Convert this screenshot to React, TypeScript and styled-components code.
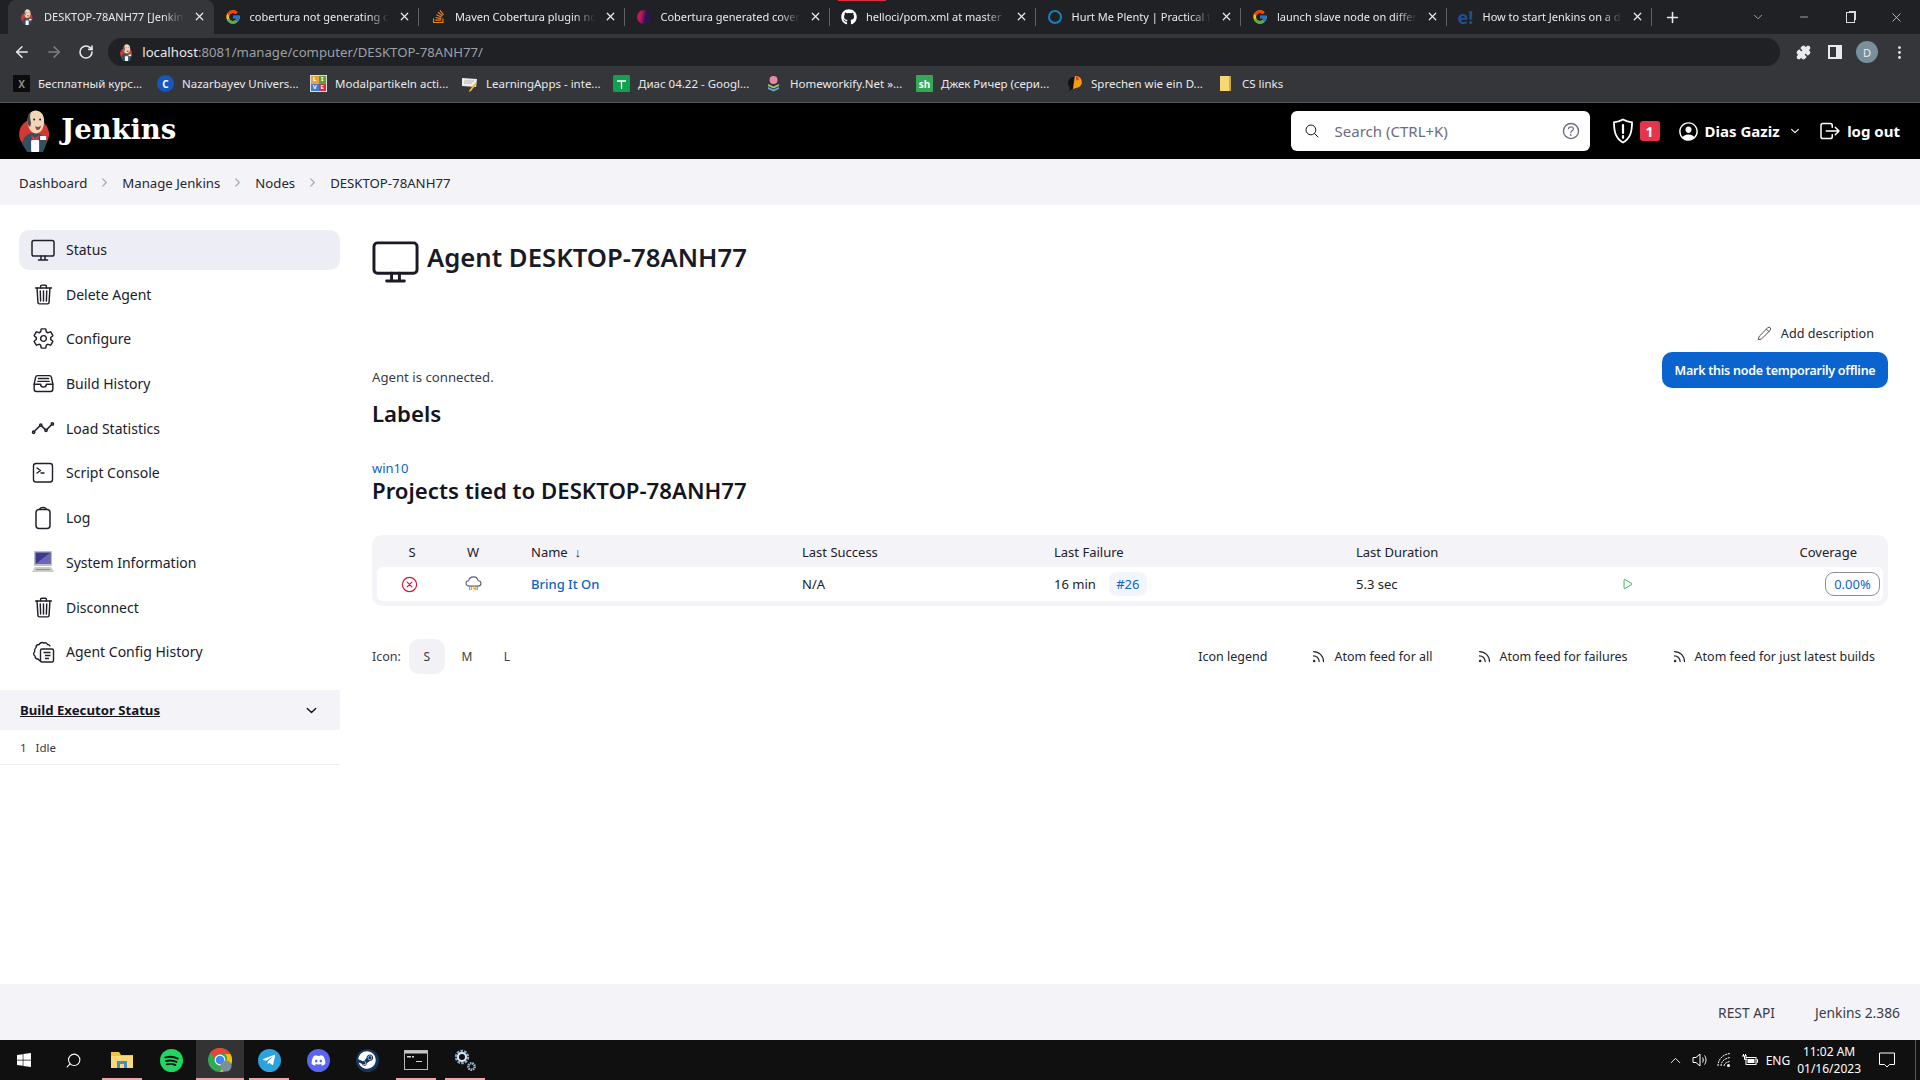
import React from 'react';
import styled, { createGlobalStyle } from 'styled-components';
import {
  IoAnalyticsOutline,
  IoChevronDownOutline,
  IoChevronForwardOutline,
  IoCloseCircleOutline,
  IoFileTrayFullOutline,
  IoHelpCircleOutline,
  IoLogOutOutline,
  IoPersonCircleOutline,
  IoPlayOutline,
  IoSearchOutline,
  IoSettingsOutline,
  IoTrashOutline,
} from 'react-icons/io5';
import { FaDiscord, FaGithub, FaStackOverflow, FaSteam, FaTelegramPlane, FaWindows } from 'react-icons/fa';
import { FcGoogle } from 'react-icons/fc';
import {
  ArrowLeft,
  ArrowRight,
  ChevronDown,
  ChevronUp,
  EllipsisVertical,
  Minus,
  Pencil,
  Plus,
  Puzzle,
  RotateCw,
  Rss,
  Search as SearchGlyph,
  X,
} from 'lucide-react';

const UI_FONT = '"Noto Sans", "Open Sans", sans-serif';

const GlobalStyle = createGlobalStyle`
  html, body {
    margin: 0;
    padding: 0;
    height: 100%;
    overflow: hidden;
    background: #fff;
  }
  * {
    box-sizing: border-box;
  }
  body {
    font-family: ${UI_FONT};
    color: #14141f;
  }
`;

const Screen = styled.div`
  display: flex;
  flex-direction: column;
  width: 1920px;
  height: 1080px;
  overflow: hidden;
`;

/* browser chrome */

const TabStrip = styled.div`
  display: flex;
  align-items: stretch;
  height: 34px;
  padding-left: 8px;
  background: #202124;
`;

const Tab = styled.div<{ $active?: boolean; $loading?: boolean }>`
  position: relative;
  display: flex;
  align-items: center;
  flex: 0 0 205.5px;
  min-width: 0;
  padding: 0 8px 1px 11px;
  gap: 9px;
  font-size: 11px;
  color: #e8eaed;
  background: ${({ $active }) => ($active ? '#35363a' : 'transparent')};
  border-radius: ${({ $active }) => ($active ? '8px 8px 0 0' : '0')};

  &::after {
    content: '';
    position: absolute;
    right: 0;
    top: 8px;
    bottom: 8px;
    width: 1px;
    background: ${({ $active }) => ($active ? 'transparent' : '#5f6368')};
  }

  &::before {
    content: '';
    position: absolute;
    top: 0;
    left: 8px;
    width: 48px;
    height: 1px;
    background: ${({ $loading }) => ($loading ? '#d9303e' : 'transparent')};
  }
`;

const TabFavicon = styled.span`
  display: flex;
  align-items: center;
  justify-content: center;
  flex: 0 0 16px;
  height: 16px;
`;

const TabTitle = styled.span`
  flex: 1;
  min-width: 0;
  overflow: hidden;
  white-space: nowrap;
  -webkit-mask-image: linear-gradient(to right, #000 85%, transparent);
  mask-image: linear-gradient(to right, #000 85%, transparent);
`;

const NewTab = styled.div`
  display: flex;
  align-items: center;
  margin-left: 12px;
  color: #e8eaed;
`;

const WindowButtons = styled.div`
  display: flex;
  margin-left: auto;
  margin-right: 1px;
`;

const WindowButton = styled.div`
  display: flex;
  align-items: center;
  justify-content: center;
  width: 46px;
  color: #dadce0;
`;

const RestoreGlyph = styled.span`
  width: 9px;
  height: 11px;
  border: 1px solid #dadce0;
  box-shadow: 2px -2px 0 -1px #dadce0;
`;

const Toolbar = styled.div`
  display: flex;
  align-items: center;
  height: 36px;
  padding: 0 5px 0 6px;
  background: #35363a;
`;

const ToolButton = styled.div<{ $dim?: boolean }>`
  display: flex;
  align-items: center;
  justify-content: center;
  flex: 0 0 32px;
  height: 28px;
  color: ${({ $dim }) => ($dim ? '#7d7f83' : '#e8eaed')};
`;

const Omnibox = styled.div`
  display: flex;
  align-items: center;
  flex: 1;
  height: 28px;
  margin: 0 7px 0 6px;
  padding-left: 12px;
  gap: 10px;
  border-radius: 14px;
  background: #202124;
  font-size: 13.2px;
  color: #9aa0a6;
`;

const UrlHost = styled.span`
  color: #e8eaed;
`;

const SidePanelGlyph = styled.span`
  width: 14px;
  height: 14px;
  border: 2px solid #e8eaed;
  border-right-width: 6px;
`;

const Avatar = styled.span`
  display: flex;
  align-items: center;
  justify-content: center;
  width: 22px;
  height: 22px;
  border-radius: 50%;
  background: #78909c;
  font-size: 11px;
  color: #e8eaed;
`;

const BookmarksBar = styled.div`
  display: flex;
  align-items: center;
  height: 33px;
  padding: 0 0 5px 13px;
  background: #35363a;
  border-bottom: 1px solid #55565a;
`;

const Bookmark = styled.div<{ $x: number }>`
  display: flex;
  align-items: center;
  flex: 0 0 ${({ $x }) => $x}px;
  gap: 8px;
  font-size: 11.5px;
  color: #e8eaed;
  white-space: nowrap;
`;

const FaviconBox = styled.span<{ $bg: string; $color?: string; $round?: boolean }>`
  display: flex;
  align-items: center;
  justify-content: center;
  flex: 0 0 17px;
  height: 17px;
  background: ${({ $bg }) => $bg};
  color: ${({ $color }) => $color ?? '#fff'};
  border-radius: ${({ $round }) => ($round ? '50%' : '1px')};
  font-size: 10px;
  font-weight: 700;
  line-height: 1;
`;

const LiveGrid = styled.span`
  display: grid;
  grid-template-columns: 1fr 1fr;
  flex: 0 0 17px;
  height: 17px;
  border: 1px solid #ddd;
  background: #fff;
  font-size: 6px;
  font-weight: 700;
  line-height: 7px;
  color: #fff;
  text-align: center;
`;

const LiveCell = styled.span<{ $bg: string }>`
  background: ${({ $bg }) => $bg};
`;

const EdurekaMark = styled.span`
  font-size: 18px;
  font-weight: 700;
  color: #1d4f91;
  line-height: 1;
`;

/* jenkins header */

const JenkinsHeader = styled.header`
  display: flex;
  align-items: center;
  height: 56px;
  padding: 0 20px 0 19px;
  background: #000;
  color: #fff;
`;

const Brand = styled.div`
  display: flex;
  align-items: center;
  gap: 12px;
`;

const BrandName = styled.span`
  margin-bottom: 4px;
  font-family: 'DejaVu Serif', serif;
  font-size: 27.5px;
  font-weight: 700;
  letter-spacing: -0.1px;
`;

const SearchBox = styled.div`
  display: flex;
  align-items: center;
  width: 299px;
  height: 40px;
  margin-left: auto;
  padding: 0 8px 0 13px;
  border-radius: 6px;
  background: #fff;
  color: #14141f;
`;

const SearchText = styled.span`
  flex: 1;
  margin-left: 15px;
  font-size: 15px;
  color: #6d6b7d;
`;

const HeaderItem = styled.div<{ $gap?: number; $left?: number }>`
  display: flex;
  align-items: center;
  gap: ${({ $gap }) => $gap ?? 6}px;
  margin-left: ${({ $left }) => $left ?? 0}px;
  font-size: 15px;
  font-weight: 700;
`;

const UserChevron = styled.span`
  display: flex;
  margin-left: 4px;
`;

const AlertBadge = styled.span`
  display: flex;
  align-items: center;
  justify-content: center;
  width: 20px;
  height: 20px;
  border-radius: 3px;
  background: #e6354a;
  font-size: 14px;
  font-weight: 700;
`;

/* breadcrumbs */

const Breadcrumbs = styled.nav`
  display: flex;
  align-items: center;
  height: 46px;
  padding: 1px 0 0 19px;
  background: #f4f4f8;
  font-size: 13.2px;
  color: #26262f;
`;

const Crumb = styled.span`
  white-space: nowrap;
`;

const CrumbArrow = styled.span`
  display: flex;
  justify-content: center;
  width: 35px;
  color: #a6a6b0;
`;

/* page body */

const Body = styled.div`
  display: flex;
  flex: 1;
  min-height: 0;
`;

const Sidebar = styled.aside`
  flex: 0 0 340px;
  padding-top: 25px;
`;

const TaskList = styled.div`
  display: flex;
  flex-direction: column;
  gap: 4.7px;
  padding-left: 19px;
`;

const Task = styled.div<{ $active?: boolean }>`
  display: flex;
  align-items: center;
  height: 40px;
  padding: 0 0 1px 12px;
  gap: 11px;
  border-radius: 10px;
  background: ${({ $active }) => ($active ? '#ededf5' : 'transparent')};
  font-size: 14px;
  color: #20202b;
`;

const TaskIcon = styled.span`
  display: flex;
  align-items: center;
  justify-content: center;
  flex: 0 0 24px;
  height: 24px;
  color: #20202b;
`;

const ExecutorHeader = styled.div`
  display: flex;
  align-items: center;
  justify-content: space-between;
  height: 40px;
  margin-top: 18px;
  padding: 0 21px 0 20px;
  background: #f4f4f8;
  font-size: 13.2px;
  font-weight: 700;
  text-decoration: underline;
`;

const ExecutorRow = styled.div`
  display: flex;
  align-items: center;
  height: 35px;
  padding-left: 20px;
  gap: 9px;
  border-bottom: 1px solid #eeeef2;
  font-size: 11.5px;
  color: #3a3a46;
`;

const Main = styled.main`
  flex: 1;
  padding: 38px 32px 0;
`;

const TitleRow = styled.div`
  display: flex;
  align-items: center;
  height: 44px;
  gap: 8px;
  color: #1a1a27;
`;

const TitleIcon = styled.span`
  display: flex;
  margin-bottom: 7px;
`;

const PageTitle = styled.h1`
  margin: 0 0 14px;
  font-size: 25.7px;
  font-weight: 600;
  line-height: 1.2;
`;

const DescriptionRow = styled.div`
  display: flex;
  justify-content: flex-end;
  align-items: center;
  height: 24px;
  margin-top: 34px;
  padding-right: 14px;
  gap: 9px;
  font-size: 12.6px;
  color: #26262f;
`;

const StatusRow = styled.div`
  display: flex;
  justify-content: space-between;
  align-items: flex-end;
  margin-top: 7px;
`;

const StatusText = styled.span`
  margin-bottom: 1px;
  font-size: 13.2px;
  line-height: 20px;
  color: #3a3a46;
`;

const PrimaryButton = styled.button`
  height: 36px;
  width: 226px;
  padding: 0;
  border: none;
  border-radius: 10px;
  background: #0b63ce;
  color: #fff;
  font-family: ${UI_FONT};
  font-size: 12.5px;
  font-weight: 600;
  letter-spacing: -0.25px;
  white-space: nowrap;
`;

const SectionTitle = styled.h2<{ $top: number }>`
  margin: ${({ $top }) => $top}px 0 0;
  font-size: 22.2px;
  font-weight: 600;
  line-height: 28px;
  color: #14141f;
`;

const LabelLink = styled.a`
  display: block;
  margin-top: 30px;
  font-size: 13px;
  line-height: 20px;
  color: #0b63ce;
`;

const ProjectsTable = styled.div`
  margin-top: 30px;
  padding: 0 5px 5px;
  border-radius: 10px;
  background: #f4f4f8;
`;

const TableGrid = styled.div`
  display: grid;
  grid-template-columns: 64px 64px 297px 252px 302px 244px 56px 1fr;
  align-items: center;
`;

const HeaderRow = styled(TableGrid)`
  height: 32px;
  padding-top: 2px;
  font-size: 13px;
  color: #20202b;
`;

const DataRow = styled(TableGrid)`
  height: 34px;
  border-radius: 6px;
  background: #fff;
  font-size: 13px;
  color: #20202b;
`;

const Cell = styled.div<{ $align?: 'center' | 'right'; $pad?: number; $padRight?: number }>`
  display: flex;
  align-items: center;
  justify-content: ${({ $align }) =>
    $align === 'center' ? 'center' : $align === 'right' ? 'flex-end' : 'flex-start'};
  padding-left: ${({ $pad }) => $pad ?? 0}px;
  padding-right: ${({ $padRight }) => $padRight ?? 0}px;
  gap: 8px;
`;

const JobLink = styled.a`
  color: #0b63ce;
  font-weight: 500;
`;

const BuildChip = styled.span`
  display: flex;
  align-items: center;
  justify-content: center;
  width: 38px;
  height: 24px;
  margin-left: 5px;
  border-radius: 8px;
  background: #f1f6fc;
  color: #0b63ce;
`;

const CoverageChip = styled.span`
  display: flex;
  align-items: center;
  justify-content: center;
  width: 55px;
  height: 24px;
  border: 1px solid #8c8c99;
  border-radius: 9px;
  color: #0b63ce;
`;

const LegendRow = styled.div`
  display: flex;
  align-items: center;
  justify-content: space-between;
  margin-top: 33px;
  height: 35px;
  padding-right: 13px;
  font-size: 12.5px;
  color: #3a3a46;
`;

const SizePicker = styled.div`
  display: flex;
  align-items: center;
`;

const SizeOption = styled.span<{ $active?: boolean; $first?: boolean }>`
  display: flex;
  align-items: center;
  justify-content: center;
  width: 36px;
  height: 35px;
  margin-left: ${({ $first }) => ($first ? '8px' : '4px')};
  border-radius: 10px;
  background: ${({ $active }) => ($active ? '#f1f1f6' : 'transparent')};
  font-size: 12px;
`;

const FeedLinks = styled.div`
  display: flex;
  align-items: center;
  gap: 44px;
`;

const FeedLink = styled.span`
  display: flex;
  align-items: center;
  gap: 8px;
  color: #26262f;
`;

const PageFooter = styled.footer`
  display: flex;
  justify-content: flex-end;
  align-items: center;
  height: 56px;
  padding-right: 20px;
  gap: 40px;
  background: #f4f4f8;
  font-size: 13.8px;
  color: #3a3a46;
`;

/* windows taskbar */

const Taskbar = styled.div`
  display: flex;
  align-items: center;
  height: 40px;
  background: #101010;
  color: #fff;
`;

const TaskbarSlot = styled.div<{ $active?: boolean; $open?: boolean }>`
  position: relative;
  display: flex;
  align-items: center;
  justify-content: center;
  width: 48px;
  height: 40px;
  margin-right: 1px;
  background: ${({ $active }) => ($active ? '#333' : 'transparent')};

  &::after {
    content: '';
    position: absolute;
    bottom: 0;
    left: ${({ $active }) => ($active ? '0' : '4px')};
    right: ${({ $active }) => ($active ? '0' : '4px')};
    height: 2px;
    background: ${({ $open }) => ($open ? '#f0a3a8' : 'transparent')};
  }
`;

const TrayGroup = styled.div`
  display: flex;
  align-items: center;
  margin-left: auto;
  padding-right: 4px;
  font-size: 12px;
`;

const TrayIcon = styled.span`
  display: flex;
  align-items: center;
  justify-content: center;
  flex: 0 0 24.5px;
`;

const TrayLang = styled.span`
  margin-left: 4px;
`;

const Clock = styled.div`
  display: flex;
  flex-direction: column;
  align-items: center;
  margin-left: 7px;
  line-height: 17px;
`;

const NotifySlot = styled.span`
  display: flex;
  margin-left: 18px;
`;

const ShowDesktop = styled.span`
  width: 1px;
  height: 40px;
  margin-left: 20px;
  background: #555;
`;

const JenkinsFace: React.FC<{ size: number }> = ({ size }) => (
  <svg width={size * 0.72} height={size} viewBox="0 0 30 42">
    <circle cx="15" cy="24" r="15" fill="#d33833" />
    <path d="M3 34c1-7 5-11 12-11s11 4 13 9l-4 10H8z" fill="#335061" />
    <path d="M8.500 11C8.500 4 12 .5 16.500 .5S25 4 25 11c0 7-3 12-8 12.500-4.500 0-8.500-5-8.500-12.500z" fill="#f0d6b7" />
    <path d="M8.500 12C8 7 9.500 4 11.500 2.500 10.500 6 11 10 12 13l-1 4c-1.500-1-2.500-3-2.500-5z" fill="#4a4a4a" />
    <path d="M16 16c2 1.500 4.500 1.200 6-.5-.5 3-2 4.500-3.500 4.500S16.500 18.500 16 16z" fill="#8a4b3a" />
    <circle cx="15" cy="9.500" r="1" fill="#222" />
    <circle cx="21" cy="9.500" r="1" fill="#222" />
    <path d="M12 25l4 3 4-3-1 5h-6z" fill="#d33833" />
    <rect x="12" y="30" width="8" height="12" rx="1" fill="#fff" />
    <path d="M21 26h6v4h-6z" fill="#fff" />
  </svg>
);

const DesktopGlyph: React.FC<{ size: number }> = ({ size }) => (
  <svg
    width={size}
    height={size}
    viewBox="0 0 24 24"
    fill="none"
    stroke="currentColor"
    strokeWidth="1.500"
    strokeLinecap="round"
    strokeLinejoin="round"
  >
    <rect x="1" y="2.500" width="22" height="15.500" rx="1.800" />
    <path d="M10 18v3.500M14 18v3.500M7.500 22h9" />
  </svg>
);

const ChromeLogo: React.FC = () => (
  <svg width="24" height="24" viewBox="0 0 24 24">
    <circle cx="12" cy="12" r="12" fill="#34a853" />
    <path d="M12 0a12 12 0 0 1 10.400 6H12a6 6 0 0 0-5.600 3.600L2.300 4.700A12 12 0 0 1 12 0z" fill="#ea4335" />
    <path d="M22.400 6A12 12 0 0 1 12 24l5.200-9A6 6 0 0 0 17 6z" fill="#fbbc05" />
    <circle cx="12" cy="12" r="5.400" fill="#fff" />
    <circle cx="12" cy="12" r="4.300" fill="#4285f4" />
    <circle cx="18" cy="18" r="5.600" fill="#78909c" />
  </svg>
);

const ShieldAlert: React.FC = () => (
  <svg width="22" height="26" viewBox="0 0 22 26" fill="none" stroke="#fff" strokeWidth="1.800">
    <path d="M11 1.500c3 1.800 6 2.600 9 2.800 0 9-1.500 16-9 20.200C3.500 20.300 2 13.300 2 4.300c3-.2 6-1 9-2.800z" />
    <path d="M11 7v8M11 18v1.800" strokeWidth="2.200" strokeLinecap="round" />
  </svg>
);

const ClipboardPlain: React.FC = () => (
  <svg width="24" height="24" viewBox="0 0 24 24" fill="none" stroke="currentColor" strokeWidth="1.500">
    <rect x="5" y="3.500" width="14" height="19" rx="3" />
    <path d="M8.500 3.500C9 2 10 1.500 12 1.500s3 .5 3.500 2" />
  </svg>
);

const TerminalBox: React.FC = () => (
  <svg width="24" height="24" viewBox="0 0 24 24" fill="none" stroke="currentColor" strokeWidth="1.400" strokeLinecap="round" strokeLinejoin="round">
    <rect x="2.500" y="2.500" width="19" height="18.500" rx="2.500" />
    <path d="M6 7l3.500 2.500L6 12M10 12h3" />
  </svg>
);

const ConfigHistory: React.FC = () => (
  <svg width="24" height="24" viewBox="0 0 24 24" fill="none" stroke="currentColor" strokeWidth="1.400">
    <path d="M11 21c-2 .5-3-1-4-2-2 0-3-1-3-3-1.500-1-2-3-.5-4 0-2 0-3.500 1.500-4.500 0-2 1.500-3 3-3 1-1.500 3-2.500 5-1.500 1.500-.5 3 .5 3.500 1.500 1 0 2.500 1 2.500 2" />
    <rect x="9.500" y="9" width="13" height="13" rx="1.500" fill="#fff" />
    <path d="M12.500 12.500h7M14 15.500h5.500M14 18.500h4" />
  </svg>
);

const OldComputer: React.FC = () => (
  <svg width="24" height="24" viewBox="0 0 24 24">
    <rect x="3" y="1" width="18" height="15" rx="1" fill="#b9bcc4" />
    <rect x="4.500" y="2.500" width="15" height="11.500" fill="#3d3a8c" />
    <path d="M4.500 14L19.500 2.500V14z" fill="#6a68b5" />
    <path d="M4 17h16l3 5H1z" fill="#c8cbc6" />
    <path d="M5 19h14v1H5z" fill="#8c8f8b" />
  </svg>
);

const StormCloud: React.FC = () => (
  <svg width="17" height="17" viewBox="0 0 16 16" fill="none">
    <path
      d="M4 9.500C2 9.500 1 8.300 1 6.900 1 5.500 2.200 4.500 3.300 4.500 3.800 2.300 5.500 .8 8 .8c2.400 0 4 1.500 4.500 3.700C14 4.500 15 5.500 15 7s-1 2.500-3 2.500z"
      stroke="#5c5e70"
      strokeWidth="1"
    />
    <path d="M8.600 8.500L7 12h1.500L7.500 15.500 10.300 11.300H8.800l1-2.800z" fill="#f5b81c" />
    <path d="M4 10.500l.6 3M12 10.500l-.6 3M5.800 10.500l.3 2.500M10.400 10.500l-.3 2.500" stroke="#4a9be0" strokeWidth="0.900" />
  </svg>
);

const ExplorerIcon: React.FC = () => (
  <svg width="24" height="24" viewBox="0 0 24 24">
    <path d="M1 4h8l2 3h12v13H1z" fill="#f5c242" />
    <path d="M1 8h22v12H1z" fill="#fbd978" />
    <rect x="7" y="13" width="10" height="7" fill="#3f8fd2" />
    <rect x="10" y="16" width="4" height="4" fill="#fbd978" />
  </svg>
);

const CmdIcon: React.FC = () => (
  <svg width="24" height="20" viewBox="0 0 24 20">
    <rect x="0.500" y="0.500" width="23" height="19" fill="#0c0c0c" stroke="#b8b8b8" />
    <rect x="1" y="1" width="22" height="2.500" fill="#c8c8c8" />
    <path d="M3 6h4v1.500H3zM8 6h2v1.500H8zM12 11h6v1H12z" fill="#d8d8d8" />
  </svg>
);

const GearsIcon: React.FC = () => (
  <svg width="24" height="24" viewBox="0 0 24 24" fill="none">
    <circle cx="9" cy="9" r="5.500" stroke="#7fa6c9" strokeWidth="3.500" strokeDasharray="2.400 1" />
    <circle cx="9" cy="9" r="4" stroke="#dfe6ec" strokeWidth="2" />
    <circle cx="18.500" cy="18.500" r="3.200" stroke="#a5bcd0" strokeWidth="2.400" strokeDasharray="1.500 .7" />
  </svg>
);

const SpotifyIcon: React.FC = () => (
  <svg width="23" height="23" viewBox="0 0 24 24">
    <circle cx="12" cy="12" r="12" fill="#1ed760" />
    <path d="M5.500 8.800c4.500-1.200 9-.9 13 1.200M6.300 12.500c3.800-1 7.500-.7 10.800 1M7 16c3.200-.8 6.200-.6 9 .8" stroke="#101010" strokeWidth="2" strokeLinecap="round" fill="none" />
  </svg>
);

const SpeakerIcon: React.FC = () => (
  <svg width="17" height="16" viewBox="0 0 17 16" fill="none" stroke="#fff" strokeWidth="1">
    <path d="M1 5.500h3L8 2v12l-4-3.500H1z" />
    <path d="M10.500 5.500c1 1.500 1 3.500 0 5M12.500 3.500c2 2.500 2 6.500 0 9" />
  </svg>
);

const WifiIcon: React.FC = () => (
  <svg width="15" height="16" viewBox="0 0 15 16" fill="none" stroke="#fff" strokeWidth="1">
    <path d="M1 14C1 8 5 2.500 13 1.500M4 14c0-4 3-7.500 9-8.500M7 14c0-2 2-4 6-4.500" strokeDasharray="2 .8" />
    <circle cx="11.500" cy="13.500" r="1.500" fill="#fff" stroke="none" />
  </svg>
);

const BatteryIcon: React.FC = () => (
  <svg width="17" height="14" viewBox="0 0 17 14" fill="none" stroke="#fff" strokeWidth="1">
    <rect x="5" y="4.500" width="10" height="7" />
    <rect x="6.500" y="6" width="7" height="4" fill="#fff" stroke="none" />
    <path d="M15.500 6.500h1v3h-1" />
    <path d="M1 3h5M2.500 1v2M4.500 1v2M3.500 3v3.500h2" />
  </svg>
);

const NotifyIcon: React.FC = () => (
  <svg width="16" height="16" viewBox="0 0 16 16" fill="none" stroke="#fff" strokeWidth="1">
    <path d="M.5 1h15v11.500h-5L8 15l-2.500-2.500h-5z" />
  </svg>
);

const NoteIcon: React.FC = () => (
  <svg width="17" height="17" viewBox="0 0 17 17">
    <path d="M1 3l15 1-1 8-14-1z" fill="#ececec" />
    <path d="M3 6h10M3 8h8" stroke="#aaa" strokeWidth="0.800" />
    <path d="M14 8l1.500 1-5.500 7-2 1 .5-2z" fill="#e7b93a" />
  </svg>
);

const SheetIcon: React.FC = () => (
  <svg width="17" height="17" viewBox="0 0 17 17">
    <rect width="17" height="17" rx="1.500" fill="#12a150" />
    <path d="M4 6h9M8.500 6v8" stroke="#fff" strokeWidth="1.300" />
  </svg>
);

const StackIcon: React.FC = () => (
  <svg width="17" height="17" viewBox="0 0 17 17">
    <circle cx="8.500" cy="5" r="4" fill="#e889a4" />
    <path d="M3 9l5.500 2.500L14 9v2l-5.500 2.500L3 11z" fill="#9acb6d" />
    <path d="M3 12l5.500 2.500L14 12v2l-5.500 2.500L3 14z" fill="#6aa7c9" />
  </svg>
);

const SpeechIcon: React.FC = () => (
  <svg width="17" height="17" viewBox="0 0 17 17">
    <path d="M8 2a6 6 0 0 0-4 10.500L3 16l4-2.500z" fill="#111" />
    <path d="M9 1a6 6 0 0 1 3 11.500L7 14z" fill="#f59e0b" />
    <path d="M10 1c2 0 3 2 3 3.500l-3 1z" fill="#e5412d" />
  </svg>
);

const FolderMark: React.FC = () => (
  <svg width="17" height="17" viewBox="0 0 17 17">
    <path d="M3 1h10l1 1v14H3z" fill="#f7d774" />
    <path d="M12 1h1l1 1v14h-2z" fill="#c8a94d" />
  </svg>
);

const RoundIcon = styled.span<{ $bg: string }>`
  display: flex;
  align-items: center;
  justify-content: center;
  width: 23px;
  height: 23px;
  border-radius: 50%;
  background: ${({ $bg }) => $bg};
  color: #fff;
`;

const RingIcon = styled.span`
  width: 14px;
  height: 14px;
  border: 2px solid #1184c2;
  border-radius: 50%;
`;

const CrescentIcon = styled.span`
  width: 14px;
  height: 14px;
  border-radius: 50%;
  background: linear-gradient(100deg, #c2185b 0 30%, #2a1650 60%);
`;

const tabs: { title: string; icon: React.ReactNode; loading?: boolean }[] = [
  { title: 'DESKTOP-78ANH77 [Jenkins]', icon: <JenkinsFace size={16} /> },
  { title: 'cobertura not generating coverage', icon: <FcGoogle size={16} /> },
  { title: 'Maven Cobertura plugin not', icon: <FaStackOverflow size={15} color="#f48024" /> },
  { title: 'Cobertura generated coverage', icon: <CrescentIcon /> },
  { title: 'helloci/pom.xml at master', icon: <FaGithub size={16} color="#fff" />, loading: true },
  { title: 'Hurt Me Plenty | Practical test', icon: <RingIcon /> },
  { title: 'launch slave node on different', icon: <FcGoogle size={16} /> },
  { title: 'How to start Jenkins on a diff', icon: <EdurekaMark>e!</EdurekaMark> },
];

const bookmarks: { title: string; width: number; icon: React.ReactNode }[] = [
  { title: 'Бесплатный курс...', width: 144, icon: <FaviconBox $bg="#0c0c0c" $color="#888">X</FaviconBox> },
  { title: 'Nazarbayev Univers...', width: 153, icon: <FaviconBox $bg="#1557c0" $round>C</FaviconBox> },
  {
    title: 'Modalpartikeln acti...',
    width: 151,
    icon: (
      <LiveGrid>
        <LiveCell $bg="#e8a33a">L</LiveCell>
        <LiveCell $bg="#5aa13e">I</LiveCell>
        <LiveCell $bg="#3f7fd2">V</LiveCell>
        <LiveCell $bg="#d9303e">E</LiveCell>
      </LiveGrid>
    ),
  },
  { title: 'LearningApps - inte...', width: 152, icon: <NoteIcon /> },
  { title: 'Диас 04.22 - Googl...', width: 152, icon: <SheetIcon /> },
  { title: 'Homeworkify.Net »...', width: 151, icon: <StackIcon /> },
  { title: 'Джек Ричер (сери...', width: 150, icon: <FaviconBox $bg="#35a853">sh</FaviconBox> },
  { title: 'Sprechen wie ein D...', width: 151, icon: <SpeechIcon /> },
  { title: 'CS links', width: 70, icon: <FolderMark /> },
];

const tasks: { title: string; icon: React.ReactNode; active?: boolean }[] = [
  { title: 'Status', icon: <DesktopGlyph size={24} />, active: true },
  { title: 'Delete Agent', icon: <IoTrashOutline size={23} /> },
  { title: 'Configure', icon: <IoSettingsOutline size={23} /> },
  { title: 'Build History', icon: <IoFileTrayFullOutline size={23} /> },
  { title: 'Load Statistics', icon: <IoAnalyticsOutline size={24} /> },
  { title: 'Script Console', icon: <TerminalBox /> },
  { title: 'Log', icon: <ClipboardPlain /> },
  { title: 'System Information', icon: <OldComputer /> },
  { title: 'Disconnect', icon: <IoTrashOutline size={23} /> },
  { title: 'Agent Config History', icon: <ConfigHistory /> },
];

const crumbs = ['Dashboard', 'Manage Jenkins', 'Nodes', 'DESKTOP-78ANH77'];
const feeds = ['Atom feed for all', 'Atom feed for failures', 'Atom feed for just latest builds'];

const taskbarApps: { icon: React.ReactNode; open?: boolean; active?: boolean }[] = [
  { icon: <ExplorerIcon />, open: true },
  { icon: <SpotifyIcon /> },
  { icon: <ChromeLogo />, open: true, active: true },
  { icon: <RoundIcon $bg="#2aa3de"><FaTelegramPlane size={14} /></RoundIcon>, open: true },
  { icon: <RoundIcon $bg="#5865f2"><FaDiscord size={15} /></RoundIcon> },
  { icon: <RoundIcon $bg="#14355c"><FaSteam size={18} /></RoundIcon> },
  { icon: <CmdIcon />, open: true },
  { icon: <GearsIcon />, open: true },
];

export default function App() {
  return (
    <Screen>
      <GlobalStyle />
      <TabStrip>
        {tabs.map((tab, i) => (
          <Tab key={tab.title} $active={i === 0} $loading={tab.loading}>
            <TabFavicon>{tab.icon}</TabFavicon>
            <TabTitle>{tab.title}</TabTitle>
            <X size={13} strokeWidth={2.2} />
          </Tab>
        ))}
        <NewTab>
          <Plus size={17} strokeWidth={2.2} />
        </NewTab>
        <WindowButtons>
          <WindowButton><ChevronDown size={14} strokeWidth={1.2} /></WindowButton>
          <WindowButton><Minus size={12} strokeWidth={1.4} /></WindowButton>
          <WindowButton><RestoreGlyph /></WindowButton>
          <WindowButton><X size={15} strokeWidth={1.2} /></WindowButton>
        </WindowButtons>
      </TabStrip>

      <Toolbar>
        <ToolButton><ArrowLeft size={18} /></ToolButton>
        <ToolButton $dim><ArrowRight size={18} /></ToolButton>
        <ToolButton><RotateCw size={16} strokeWidth={2.4} /></ToolButton>
        <Omnibox>
          <JenkinsFace size={17} />
          <span>
            <UrlHost>localhost</UrlHost>:8081/manage/computer/DESKTOP-78ANH77/
          </span>
        </Omnibox>
        <ToolButton><Puzzle size={15} fill="#e8eaed" /></ToolButton>
        <ToolButton><SidePanelGlyph /></ToolButton>
        <ToolButton><Avatar>D</Avatar></ToolButton>
        <ToolButton><EllipsisVertical size={17} /></ToolButton>
      </Toolbar>

      <BookmarksBar>
        {bookmarks.map((b) => (
          <Bookmark key={b.title} $x={b.width}>
            {b.icon}
            {b.title}
          </Bookmark>
        ))}
      </BookmarksBar>

      <JenkinsHeader>
        <Brand>
          <JenkinsFace size={42} />
          <BrandName>Jenkins</BrandName>
        </Brand>
        <SearchBox>
          <IoSearchOutline size={16} />
          <SearchText>Search (CTRL+K)</SearchText>
          <IoHelpCircleOutline size={22} color="#6d6b7d" />
        </SearchBox>
        <HeaderItem $left={22}>
          <ShieldAlert />
          <AlertBadge>1</AlertBadge>
        </HeaderItem>
        <HeaderItem $left={17} $gap={5}>
          <IoPersonCircleOutline size={23} />
          Dias Gaziz
          <UserChevron><IoChevronDownOutline size={12} /></UserChevron>
        </HeaderItem>
        <HeaderItem $left={17.5} $gap={5}>
          <IoLogOutOutline size={24} />
          log out
        </HeaderItem>
      </JenkinsHeader>

      <Breadcrumbs>
        {crumbs.map((crumb, i) => (
          <React.Fragment key={crumb}>
            <Crumb>{crumb}</Crumb>
            {i < crumbs.length - 1 && (
              <CrumbArrow><IoChevronForwardOutline size={13} /></CrumbArrow>
            )}
          </React.Fragment>
        ))}
      </Breadcrumbs>

      <Body>
        <Sidebar>
          <TaskList>
            {tasks.map((task) => (
              <Task key={task.title} $active={task.active}>
                <TaskIcon>{task.icon}</TaskIcon>
                {task.title}
              </Task>
            ))}
          </TaskList>
          <ExecutorHeader>
            Build Executor Status
            <IoChevronDownOutline size={15} />
          </ExecutorHeader>
          <ExecutorRow>
            <span>1</span>
            <span>Idle</span>
          </ExecutorRow>
        </Sidebar>

        <Main>
          <TitleRow>
            <TitleIcon><DesktopGlyph size={47} /></TitleIcon>
            <PageTitle>Agent DESKTOP-78ANH77</PageTitle>
          </TitleRow>
          <DescriptionRow>
            <Pencil size={15} strokeWidth={1.3} />
            Add description
          </DescriptionRow>
          <StatusRow>
            <StatusText>Agent is connected.</StatusText>
            <PrimaryButton>Mark this node temporarily offline</PrimaryButton>
          </StatusRow>
          <SectionTitle $top={12}>Labels</SectionTitle>
          <LabelLink>win10</LabelLink>
          <SectionTitle $top={-1}>Projects tied to DESKTOP-78ANH77</SectionTitle>

          <ProjectsTable>
            <HeaderRow>
              <Cell $align="center" $pad={6}>S</Cell>
              <Cell $align="center">W</Cell>
              <Cell $pad={26}>Name&nbsp;&nbsp;↓</Cell>
              <Cell>Last Success</Cell>
              <Cell>Last Failure</Cell>
              <Cell>Last Duration</Cell>
              <Cell />
              <Cell $align="right" $padRight={26}>Coverage</Cell>
            </HeaderRow>
            <DataRow>
              <Cell $align="center"><IoCloseCircleOutline size={19} color="#d9143a" /></Cell>
              <Cell $align="center"><StormCloud /></Cell>
              <Cell $pad={26}><JobLink>Bring It On</JobLink></Cell>
              <Cell>N/A</Cell>
              <Cell>16 min<BuildChip>#26</BuildChip></Cell>
              <Cell>5.3 sec</Cell>
              <Cell $align="center"><IoPlayOutline size={14} color="#1ea64b" /></Cell>
              <Cell $align="right" $padRight={3}><CoverageChip>0.00%</CoverageChip></Cell>
            </DataRow>
          </ProjectsTable>

          <LegendRow>
            <SizePicker>
              Icon:
              <SizeOption $active $first>S</SizeOption>
              <SizeOption>M</SizeOption>
              <SizeOption>L</SizeOption>
            </SizePicker>
            <FeedLinks>
              <FeedLink>Icon legend</FeedLink>
              {feeds.map((feed) => (
                <FeedLink key={feed}>
                  <Rss size={15} strokeWidth={2} />
                  {feed}
                </FeedLink>
              ))}
            </FeedLinks>
          </LegendRow>
        </Main>
      </Body>

      <PageFooter>
        <span>REST API</span>
        <span>Jenkins 2.386</span>
      </PageFooter>

      <Taskbar>
        <TaskbarSlot><FaWindows size={16} /></TaskbarSlot>
        <TaskbarSlot><SearchGlyph size={17} strokeWidth={1.5} style={{ transform: 'scaleX(-1)' }} /></TaskbarSlot>
        {taskbarApps.map((app, i) => (
          <TaskbarSlot key={i} $active={app.active} $open={app.open}>
            {app.icon}
          </TaskbarSlot>
        ))}
        <TrayGroup>
          <TrayIcon><ChevronUp size={17} strokeWidth={1.3} /></TrayIcon>
          <TrayIcon><SpeakerIcon /></TrayIcon>
          <TrayIcon><WifiIcon /></TrayIcon>
          <TrayIcon><BatteryIcon /></TrayIcon>
          <TrayLang>ENG</TrayLang>
          <Clock>
            <span>11:02 AM</span>
            <span>01/16/2023</span>
          </Clock>
          <NotifySlot><NotifyIcon /></NotifySlot>
          <ShowDesktop />
        </TrayGroup>
      </Taskbar>
    </Screen>
  );
}
